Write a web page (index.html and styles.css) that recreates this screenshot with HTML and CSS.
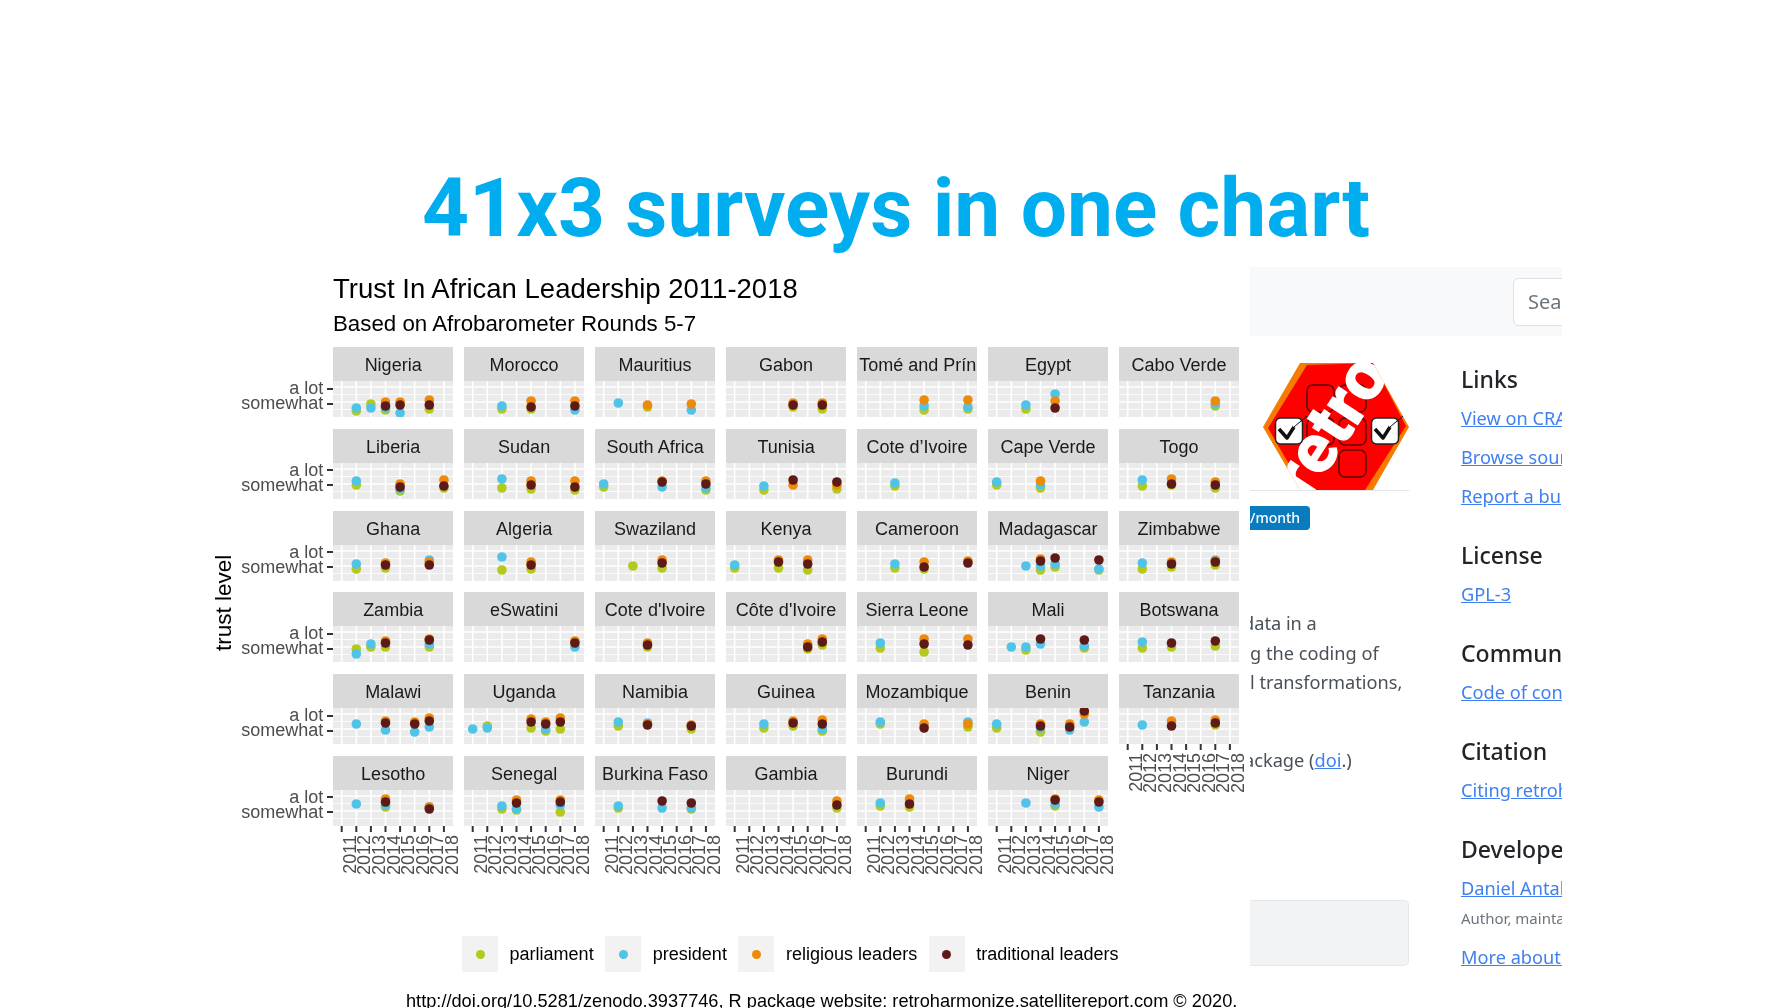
FILE: index.html
```html
<!DOCTYPE html>
<html lang="en">
<head>
    <meta charset="UTF-8">
    <meta name="viewport" content="width=device-width, initial-scale=1.0">
    <title>41x3 surveys in one chart</title>
    <link rel="stylesheet" href="styles.css">
</head>
<body>
    <div class="slide">
        <h1 class="slide-title">41x3 surveys in one chart</h1>
        <div class="stage">
            <div class="chart">
                <div class="chart-title">Trust In African Leadership 2011-2018</div>
                <div class="chart-subtitle">Based on Afrobarometer Rounds 5-7</div>
                <div class="chart-body">
                    <div class="y-title">trust level</div>
                    <div class="y-axis" id="yAxis"></div>
                    <div class="facets" id="facets"></div>
                </div>
                <div class="legend">
                    <div class="legend-key"><span class="legend-dot parliament"></span></div>
                    <span>parliament</span>
                    <div class="legend-key"><span class="legend-dot president"></span></div>
                    <span>president</span>
                    <div class="legend-key"><span class="legend-dot religious"></span></div>
                    <span>religious leaders</span>
                    <div class="legend-key"><span class="legend-dot traditional"></span></div>
                    <span>traditional leaders</span>
                </div>
                <div class="source">http://doi.org/10.5281/zenodo.3937746, R package website: retroharmonize.satellitereport.com © 2020.</div>
            </div>

            <div class="site">
                <div class="site-nav">
                    <div class="site-search">Search for</div>
                </div>
                <div class="site-content">
                    <div class="site-main">
                        <div class="logo">
                            <svg width="146" height="127" viewBox="0 0 146 127">
                                <defs>
                                    <clipPath id="hexClip">
                                        <polygon points="0,64 37,0 110,0 146,64 110,127 37,127"/>
                                    </clipPath>
                                </defs>
                                <g clip-path="url(#hexClip)">
                                    <rect width="146" height="127" fill="#f57c00"/>
                                    <polygon points="5,65 44,2 110,0 143,63 102,127 41,127" fill="#fe0000"/>
                                    <g fill="none" stroke="#5a0a0a" stroke-width="1.5">
                                        <rect x="44" y="22" width="27" height="27" rx="6"/>
                                        <rect x="76" y="22" width="27" height="27" rx="6"/>
                                        <rect x="44" y="55" width="27" height="27" rx="6"/>
                                        <rect x="76" y="55" width="27" height="27" rx="6"/>
                                        <rect x="76" y="87" width="27" height="27" rx="6"/>
                                    </g>
                                    <text class="logo-text" transform="translate(45 139) rotate(-57)">retro</text>
                                    <g stroke="#222" stroke-width="1.5" fill="#fff">
                                        <rect x="12.5" y="55" width="27" height="26" rx="5"/>
                                        <rect x="108.5" y="55" width="27" height="26" rx="5"/>
                                    </g>
                                    <g fill="none" stroke="#111" stroke-linejoin="round">
                                        <path d="M16 66l8 9 7-11" stroke-width="3.5"/>
                                        <path d="M31 64l13-11" stroke-width="1"/>
                                        <path d="M112 66l8 9 7-11" stroke-width="3.5"/>
                                        <path d="M127 64l13-11" stroke-width="1"/>
                                    </g>
                                </g>
                            </svg>
                        </div>
                        <div class="badge">/month</div>
                        <div class="site-text">
                            <div class="clip-d">data in a</div>
                            <div>g the coding of</div>
                            <div>l transformations,</div>
                            <div class="clip-a">ackage (<a href="#">doi</a>.)</div>
                        </div>
                        <div class="site-box"></div>
                    </div>
                    <div class="site-side">
                        <div class="side-section">
                            <h2>Links</h2>
                            <a href="#">View on CRAN</a>
                            <a href="#">Browse source code</a>
                            <a href="#">Report a bug</a>
                        </div>
                        <div class="side-section">
                            <h2>License</h2>
                            <a href="#">GPL-3</a>
                        </div>
                        <div class="side-section">
                            <h2>Community</h2>
                            <a href="#">Code of conduct</a>
                        </div>
                        <div class="side-section">
                            <h2>Citation</h2>
                            <a href="#">Citing retroharmonize</a>
                        </div>
                        <div class="side-section">
                            <h2>Developers</h2>
                            <a href="#">Daniel Antal</a>
                            <small>Author, maintainer</small>
                            <a href="#">More about authors</a>
                        </div>
                    </div>
                </div>
            </div>
        </div>
    </div>
    <script src="chart.js"></script>
</body>
</html>
```
FILE: styles.css
```css
/* General Styles */
html, body {
    margin: 0;
    height: 100%;
    overflow: hidden;
    background: #fff;
}

.slide {
    padding-top: 155px;
}

.slide-title {
    margin: 0;
    font-family: Roboto, sans-serif;
    font-size: 82px;
    font-weight: 700;
    line-height: 106px;
    text-align: center;
    color: #00aeef;
}

.stage {
    display: flex;
    align-items: flex-start;
    filter: blur(0.4px); /* the source is a video frame */
}

/* Chart */
.chart {
    width: 1038px;
    margin-left: 212px;
    font-family: "Liberation Sans", Arial, sans-serif;
    color: #000;
}

.chart-title {
    margin: 12px 0 0 121px;
    font-size: 27.5px;
    line-height: 32px;
}

.chart-subtitle {
    margin: 4px 0 8px 121px;
    font-size: 22.3px;
    line-height: 30px;
}

.chart-body {
    display: flex;
    align-items: flex-start;
    height: 583px;
}

.y-title {
    width: 28px;
    margin-top: 16px;
    margin-left: -2px;
    margin-right: 2px;
    align-self: flex-start;
    height: 480px;
    writing-mode: vertical-rl;
    transform: rotate(180deg);
    font-size: 22.5px;
    line-height: 28px;
    text-align: center;
}

.y-axis {
    width: 93.3px;
    display: flex;
    flex-direction: column;
    gap: 11.75px;
}

.y-row {
    height: 36px;
    padding-top: 34px;
}

.y-label {
    display: flex;
    justify-content: flex-end;
    align-items: center;
    height: 15px;
    font-size: 18px;
    line-height: 15px;
    color: #4d4d4d;
}

.y-label::after {
    content: "";
    width: 6px;
    height: 2px;
    margin-left: 4px;
    background: #333;
}

.facets {
    display: flex;
    gap: 11.3px;
}

.facet-col {
    width: 119.7px;
    display: flex;
    flex-direction: column;
    gap: 11.75px;
}

.strip {
    height: 34px;
    padding: 0 2px;
    overflow: hidden;
    background: #d9d9d9;
    font-size: 18px;
    line-height: 37px;
    text-align: center;
    white-space: nowrap;
    color: #1a1a1a;
}

.plot {
    display: block;
    width: 100%;
    height: 36px;
    background: #ebebeb;
}

.x-axis {
    display: block;
    width: 100%;
    height: 52px;
    overflow: visible;
}

.x-axis text {
    font-size: 18px;
    fill: #4d4d4d;
}

.legend {
    display: flex;
    align-items: center;
    gap: 11.6px;
    margin: 6px 0 0 250px;
    font-size: 18px;
    color: #000;
}

.legend-key {
    width: 36px;
    height: 36px;
    display: flex;
    align-items: center;
    justify-content: center;
    background: #f2f2f2;
}

.legend-dot {
    width: 9px;
    height: 9px;
    border-radius: 50%;
}

.parliament { background: #b3c91b; }
.president { background: #4fc3e8; }
.religious { background: #ee8a0a; }
.traditional { background: #5e1a16; }

.source {
    margin: 18px 0 0 194px;
    font-size: 18.2px;
    line-height: 22px;
    white-space: nowrap;
}

/* Website screenshot on the right */
.site {
    width: 312px;
    height: 708px;
    margin-top: 6px;
    overflow: hidden;
    font-family: "Noto Sans", sans-serif;
    font-size: 18.2px;
    color: #495057;
}

.site-nav {
    height: 69px;
    padding-left: 263px;
    display: flex;
    align-items: center;
    background: #f8f9fa;
}

.site-search {
    flex: none;
    width: 180px;
    height: 46px;
    padding-left: 14px;
    border: 1px solid #dee2e6;
    border-radius: 6px;
    background: #fff;
    font-size: 20px;
    line-height: 46px;
    color: #6c757d;
}

.site-content {
    display: flex;
}

.site-main {
    flex: none;
    width: 159px;
    overflow: hidden;
}

.logo {
    margin-top: 27px;
    padding-left: 13px;
    border-bottom: 1px solid #e5e5e5;
    line-height: 0;
}

.logo-text {
    font-family: Roboto, sans-serif;
    font-size: 70px;
    font-weight: 900;
    fill: #fff;
}

.badge {
    width: 60px;
    height: 24px;
    margin-top: 15px;
    border-radius: 0 4px 4px 0;
    background: #0a7bbd;
    font-size: 14px;
    font-weight: 500;
    line-height: 24px;
    color: #fff;
}

.site-text {
    margin-top: 79px;
    line-height: 29.5px;
    white-space: nowrap;
}

.clip-d {
    margin-left: -7px;
}

.clip-a {
    margin-top: 47px;
    margin-left: -6px;
}

.site-box {
    height: 66px;
    margin-top: 125px;
    border: 1px solid #e6e8ea;
    border-left: 0;
    border-radius: 0 5px 5px 0;
    box-sizing: border-box;
    background: #f1f3f5;
}

.site-side {
    flex: none;
    width: 300px;
    margin-left: 52px;
    padding-top: 28px;
}

.side-section {
    display: flex;
    flex-direction: column;
    align-items: flex-start;
    gap: 9px;
    margin-bottom: 29px;
    white-space: nowrap;
}

.side-section h2 {
    margin: 0;
    font-size: 23px;
    font-weight: 500;
    line-height: 30px;
    color: #212529;
}

.site a {
    line-height: 30px;
    color: #3f7ff0;
}

.side-section small {
    margin: -4px 0 5px;
    font-size: 15px;
    line-height: 20px;
    color: #6c757d;
}
```
FILE: chart.js
```js
// facets in ggplot order (row by row), y values are px from the top of the panel
// year index: [parliament, president, religious leaders, traditional leaders], 0 = no survey
const FACETS = [
    ["Nigeria", { 1: [30, 27, 0, 0], 2: [23, 27, 0, 0], 3: [29, 27, 21, 25], 4: [0, 32, 21, 24], 6: [28, 0, 19, 24] }],
    ["Morocco", { 2: [28, 25, 0, 0], 4: [28, 0, 20, 26], 7: [0, 29, 20, 25] }],
    ["Mauritius", { 1: [0, 22, 0, 0], 3: [26, 0, 24, 0], 6: [0, 29, 23, 0] }],
    ["Gabon", { 4: [26, 0, 22, 24], 6: [28, 0, 22, 24] }],
    ["Tomé and Príncipe", { 4: [29, 25, 19, 0], 7: [28, 26, 19, 0] }],
    ["Egypt", { 2: [28, 24, 0, 0], 4: [0, 13, 20, 27] }],
    ["Cabo Verde", { 6: [25, 23, 20, 0] }],

    ["Liberia", { 1: [22, 18, 0, 0], 4: [28, 26, 21, 24], 7: [25, 0, 17, 23] }],
    ["Sudan", { 2: [25, 16, 0, 0], 4: [26, 0, 18, 22], 7: [27, 0, 18, 24] }],
    ["South Africa", { 0: [24, 21, 0, 0], 4: [0, 24, 18, 19], 7: [27, 25, 18, 21] }],
    ["Tunisia", { 2: [27, 23, 0, 0], 4: [0, 0, 22, 17], 7: [26, 0, 22, 19] }],
    ["Cote d’Ivoire", { 2: [23, 20, 0, 0] }],
    ["Cape Verde", { 0: [22, 19, 0, 0], 3: [25, 22, 18, 0] }],
    ["Togo", { 1: [23, 17, 0, 0], 3: [22, 0, 16, 21], 6: [25, 0, 19, 22] }],

    ["Ghana", { 1: [24, 19, 0, 0], 3: [23, 0, 18, 20], 6: [0, 15, 17, 20] }],
    ["Algeria", { 2: [25, 12, 0, 0], 4: [24, 0, 17, 20] }],
    ["Swaziland", { 2: [21, 0, 0, 0], 4: [23, 0, 15, 18] }],
    ["Kenya", { 0: [23, 20, 0, 0], 3: [23, 0, 15, 17], 5: [25, 0, 15, 19] }],
    ["Cameroon", { 2: [23, 19, 0, 0], 4: [24, 0, 17, 22], 7: [0, 0, 16, 18] }],
    ["Madagascar", { 2: [0, 21, 0, 0], 3: [25, 21, 14, 16], 4: [22, 19, 0, 13], 7: [25, 24, 0, 15] }],
    ["Zimbabwe", { 1: [24, 18, 0, 0], 3: [22, 0, 17, 19], 6: [20, 15, 16, 17] }],

    ["Zambia", { 1: [23, 28, 0, 0], 2: [21, 18, 0, 0], 3: [21, 0, 15, 17], 6: [21, 18, 13, 14] }],
    ["eSwatini", { 7: [0, 21, 15, 17] }],
    ["Cote d'Ivoire", { 3: [21, 0, 17, 19] }],
    ["Côte d'Ivoire", { 5: [23, 0, 18, 21], 6: [19, 0, 13, 16] }],
    ["Sierra Leone", { 1: [22, 17, 0, 0], 4: [26, 0, 13, 18], 7: [0, 0, 13, 19] }],
    ["Mali", { 1: [0, 21, 0, 0], 2: [24, 21, 0, 0], 3: [0, 18, 0, 13], 6: [22, 20, 0, 14] }],
    ["Botswana", { 1: [22, 16, 0, 0], 3: [21, 0, 0, 17], 6: [20, 0, 0, 15] }],

    ["Malawi", { 1: [0, 16, 0, 0], 3: [0, 22, 13, 15], 5: [0, 24, 14, 16], 6: [0, 19, 10, 13] }],
    ["Uganda", { 0: [0, 21, 0, 0], 1: [18, 20, 0, 0], 4: [20, 0, 11, 14], 5: [23, 21, 14, 16], 6: [21, 0, 10, 14] }],
    ["Namibia", { 1: [18, 14, 0, 0], 3: [0, 15, 16, 17], 6: [21, 0, 17, 18] }],
    ["Guinea", { 2: [20, 16, 0, 0], 4: [18, 0, 13, 15], 6: [23, 21, 12, 16] }],
    ["Mozambique", { 1: [16, 14, 0, 0], 4: [0, 0, 16, 20], 7: [19, 14, 16, 0] }],
    ["Benin", { 0: [20, 16, 0, 0], 3: [24, 20, 16, 18], 5: [0, 22, 16, 19], 6: [0, 14, 6, 3] }],
    ["Tanzania", { 1: [0, 17, 0, 0], 3: [0, 0, 13, 18], 6: [17, 0, 12, 15] }],

    ["Lesotho", { 1: [0, 14, 0, 0], 3: [17, 15, 9, 12], 6: [0, 17, 17, 19] }],
    ["Senegal", { 2: [19, 16, 0, 0], 3: [20, 19, 10, 13], 6: [22, 15, 10, 12] }],
    ["Burkina Faso", { 1: [18, 16, 0, 0], 4: [0, 18, 0, 11], 6: [19, 18, 0, 13] }],
    ["Gambia", { 7: [18, 0, 11, 15] }],
    ["Burundi", { 1: [16, 13, 0, 0], 3: [17, 0, 9, 14] }],
    ["Niger", { 2: [0, 13, 0, 0], 4: [16, 14, 9, 10], 7: [0, 17, 10, 12] }]
];

const YEARS = [2011, 2012, 2013, 2014, 2015, 2016, 2017, 2018];
const DOT_COLORS = ["#b3c91b", "#4fc3e8", "#ee8a0a", "#5e1a16"];
const COLUMNS = 7;

function yearX(i) {
    return 8.7 + 14.6 * i;
}

function plotSvg(points) {
    let html = '<svg class="plot">';

    // grid lines
    [6, 21].forEach(y => {
        html += `<line x1="0" x2="120" y1="${y}" y2="${y}" stroke="#fff" stroke-width="1.6"/>`;
    });
    [13.5, 28.5].forEach(y => {
        html += `<line x1="0" x2="120" y1="${y}" y2="${y}" stroke="#fff" stroke-width="0.8"/>`;
    });
    YEARS.forEach((year, i) => {
        html += `<line x1="${yearX(i)}" x2="${yearX(i)}" y1="0" y2="36" stroke="#fff" stroke-width="1.6"/>`;
    });

    // dots, traditional leaders end up on top
    Object.keys(points).forEach(i => {
        points[i].forEach((y, series) => {
            if (y) {
                html += `<circle cx="${yearX(i)}" cy="${y}" r="4.8" fill="${DOT_COLORS[series]}"/>`;
            }
        });
    });

    return html + "</svg>";
}

function xAxisSvg() {
    let html = '<svg class="x-axis">';
    YEARS.forEach((year, i) => {
        const x = yearX(i);
        html += `<rect x="${x - 1}" y="0" width="2" height="6" fill="#333"/>`;
        html += `<text transform="translate(${x + 14} 9) rotate(-90)" text-anchor="end">${year}</text>`;
    });
    return html + "</svg>";
}

function buildChart() {
    const columns = [];
    for (let c = 0; c < COLUMNS; c++) {
        columns.push([]);
    }
    FACETS.forEach((facet, i) => columns[i % COLUMNS].push(facet));

    document.getElementById("facets").innerHTML = columns.map(column => {
        const cells = column.map((facet, i) => {
            const axis = i === column.length - 1 ? xAxisSvg() : "";
            return `<div class="facet"><div class="strip">${facet[0]}</div>${plotSvg(facet[1])}${axis}</div>`;
        });
        return `<div class="facet-col">${cells.join("")}</div>`;
    }).join("");

    let rows = "";
    for (let r = 0; r < 6; r++) {
        rows += '<div class="y-row"><div class="y-label">a lot</div><div class="y-label">somewhat</div></div>';
    }
    document.getElementById("yAxis").innerHTML = rows;
}

buildChart();
```
